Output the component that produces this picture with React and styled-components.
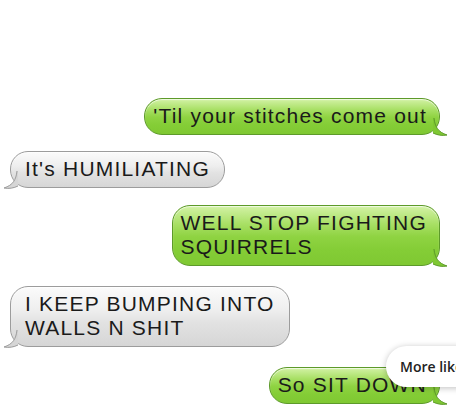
import React from "react";
import styled, { createGlobalStyle, css } from "styled-components";

const Global = createGlobalStyle`
  html, body { margin: 0; padding: 0; background: #ffffff; overflow: hidden; }
  body { font-family: "Liberation Sans", Arial, sans-serif; }
`;

const Screen = styled.div`
  position: relative;
  width: 456px;
  height: 418px;
  overflow: hidden;
  background: #fff;
  display: flex;
  flex-direction: column;
  padding-top: 98px;
  box-sizing: border-box;
`;

const Row = styled.div`
  display: flex;
  justify-content: ${(p) => (p.$me ? "flex-end" : "flex-start")};
  padding: ${(p) => (p.$me ? "0 16px 0 0" : "0 0 0 10px")};
  margin-top: ${(p) => p.$gap || 0}px;
`;

const green = css`
  background: linear-gradient(
    to bottom,
    #d3f2a6 0%,
    #a9e066 30%,
    #8fd342 52%,
    #84cd36 75%,
    #7fc832 100%
  );
  border: 1px solid #5d9a2a;
  padding: 5px 12px 6px 8px;
`;

const gray = css`
  background: linear-gradient(
    to bottom,
    #fbfbfb 0%,
    #eeeeee 40%,
    #e2e2e2 60%,
    #d6d6d6 100%
  );
  border: 1px solid #9c9c9c;
  padding: 5px 14px 6px 14px;
`;

const Bubble = styled.div`
  position: relative;
  box-sizing: border-box;
  ${(p) => (p.$me ? green : gray)};
  border-radius: 18px;
  font-family: "Liberation Sans", Arial, sans-serif;
  font-size: 21px;
  line-height: 24px;
  color: #1a1a1a;
  letter-spacing: 1.2px;
  white-space: pre-line;
  box-shadow: inset 0 1px 1px rgba(255, 255, 255, 0.7);
`;

const TailSvg = styled.svg`
  position: absolute;
  bottom: -2px;
  ${(p) => (p.$me ? "right: -10px;" : "left: -9px; transform: scaleX(-1);")}
  width: 16px;
  height: 18px;
  overflow: visible;
`;

function Tail({ me }) {
  const fill = me ? "#7fc832" : "#d6d6d6";
  const stroke = me ? "#5d9a2a" : "#9c9c9c";
  return (
    <TailSvg $me={me} viewBox="0 0 16 18">
      <path
        d="M1 0 C 2 9, 5 14, 14 17 C 9 18, 4 17, 0 15 L 0 0 Z"
        fill={fill}
      />
      <path
        d="M1 0 C 2 9, 5 14, 14 17 C 9 18, 4 17, 0 15"
        fill="none"
        stroke={stroke}
        strokeWidth="1"
      />
    </TailSvg>
  );
}

const Popup = styled.div`
  position: absolute;
  left: 386px;
  top: 346px;
  height: 41px;
  width: 120px;
  background: #ffffff;
  border-radius: 21px;
  box-shadow: 0 1px 6px rgba(0, 0, 0, 0.25);
  display: flex;
  align-items: center;
  padding-left: 14px;
  box-sizing: border-box;
  font-family: "Open Sans", "Liberation Sans", sans-serif;
  font-weight: 600;
  font-size: 14px;
  color: #222;
  white-space: nowrap;
`;

const messages = [
  { me: true, text: "'Til your stitches come out", gap: 0 },
  { me: false, text: "It's HUMILIATING", gap: 16 },
  { me: true, text: "WELL STOP FIGHTING\nSQUIRRELS", gap: 17 },
  { me: false, text: "I KEEP BUMPING INTO\nWALLS N SHIT", gap: 20 },
  { me: true, text: "So SIT DOWN", gap: 20 },
];

export default function App() {
  return (
    <Screen>
      <Global />
      {messages.map((m, i) => (
        <Row key={i} $me={m.me} $gap={m.gap}>
          <Bubble $me={m.me}>
            {m.text}
            <Tail me={m.me} />
          </Bubble>
        </Row>
      ))}
      <Popup>More like this</Popup>
    </Screen>
  );
}
